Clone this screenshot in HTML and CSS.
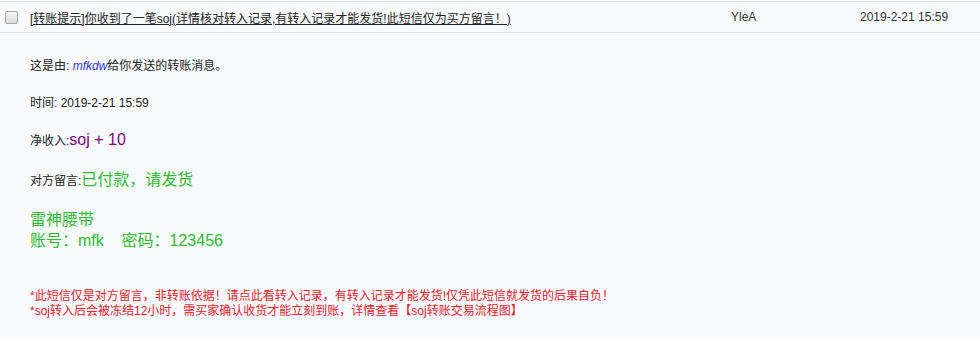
FILE: index.html
```html
<!DOCTYPE html>
<html>
<head>
<meta charset="utf-8">
<link rel="stylesheet" href="styles.css">
</head>
<body>
<div class="row">
  <span class="cell-check"><span class="checkbox"></span></span>
  <a class="cell-title" href="#">[转账提示]你收到了一笔soj(详情核对转入记录,有转入记录才能发货!此短信仅为买方留言！)</a>
  <span class="cell-from">YleA</span>
  <span class="cell-date">2019-2-21 15:59</span>
</div>
<div class="msg">
  <p class="line l1">这是由: <a class="user" href="#">mfkdw</a>给你发送的转账消息。</p>
  <p class="line l2">时间: 2019-2-21 15:59</p>
  <p class="line l3">净收入:<span class="amount">soj + 10</span></p>
  <p class="line l4">对方留言:<span class="note">已付款，请发货</span></p>
  <div class="green">
    <div>雷神腰带</div>
    <div>账号：mfk&nbsp;&nbsp;&nbsp;&nbsp;密码：123456</div>
  </div>
  <div class="warn">
    <div>*此短信仅是对方留言，非转账依据！请点此看转入记录，有转入记录才能发货!仅凭此短信就发货的后果自负！</div>
    <div>*soj转入后会被冻结12小时，需买家确认收货才能立刻到账，详情查看【soj转账交易流程图】</div>
  </div>
</div>
</body>
</html>
```
FILE: styles.css
```css
html, body {
  margin: 0;
  padding: 0;
  background: #f8fafd;
}
body {
  font-family: "Liberation Sans", Arial, "Noto Sans CJK SC", sans-serif;
  font-size: 12px;
  color: #333;
}
.row {
  display: flex;
  align-items: center;
  height: 30px;
  margin-top: 1px;
  border-top: 1px solid #dfe3ea;
  border-bottom: 1px solid #dfe3ea;
  background: #f8fafd;
}
.cell-check {
  width: 30px;
  display: flex;
  padding-left: 5px;
  box-sizing: border-box;
}
.checkbox {
  width: 11px;
  height: 11px;
  border: 1px solid #a8a8a8;
  border-radius: 2px;
  background: linear-gradient(#f4f4f4, #dcdcdc);
}
.cell-title {
  width: 701px;
  color: #222;
  text-decoration: underline;
}
.cell-from {
  width: 129px;
  color: #333;
}
.cell-date {
  color: #333;
}
.msg {
  padding: 24px 0 0 30px;
}
.line {
  margin: 0;
  line-height: 18px;
  color: #222;
}
.l2 { margin-top: 19px; }
.l3 { margin-top: 17px; line-height: 22px; }
.l4 { margin-top: 17px; line-height: 22px; }
.user {
  color: #3333cc;
  font-style: italic;
  text-decoration: none;
}
.amount {
  color: #800080;
  font-size: 16px;
}
.note {
  color: #33b833;
  font-size: 16px;
}
.green {
  margin-top: 17px;
  color: #33b833;
  font-size: 16px;
  line-height: 21px;
}
.warn {
  margin-top: 38px;
  color: #e8222c;
  line-height: 15px;
}
```
